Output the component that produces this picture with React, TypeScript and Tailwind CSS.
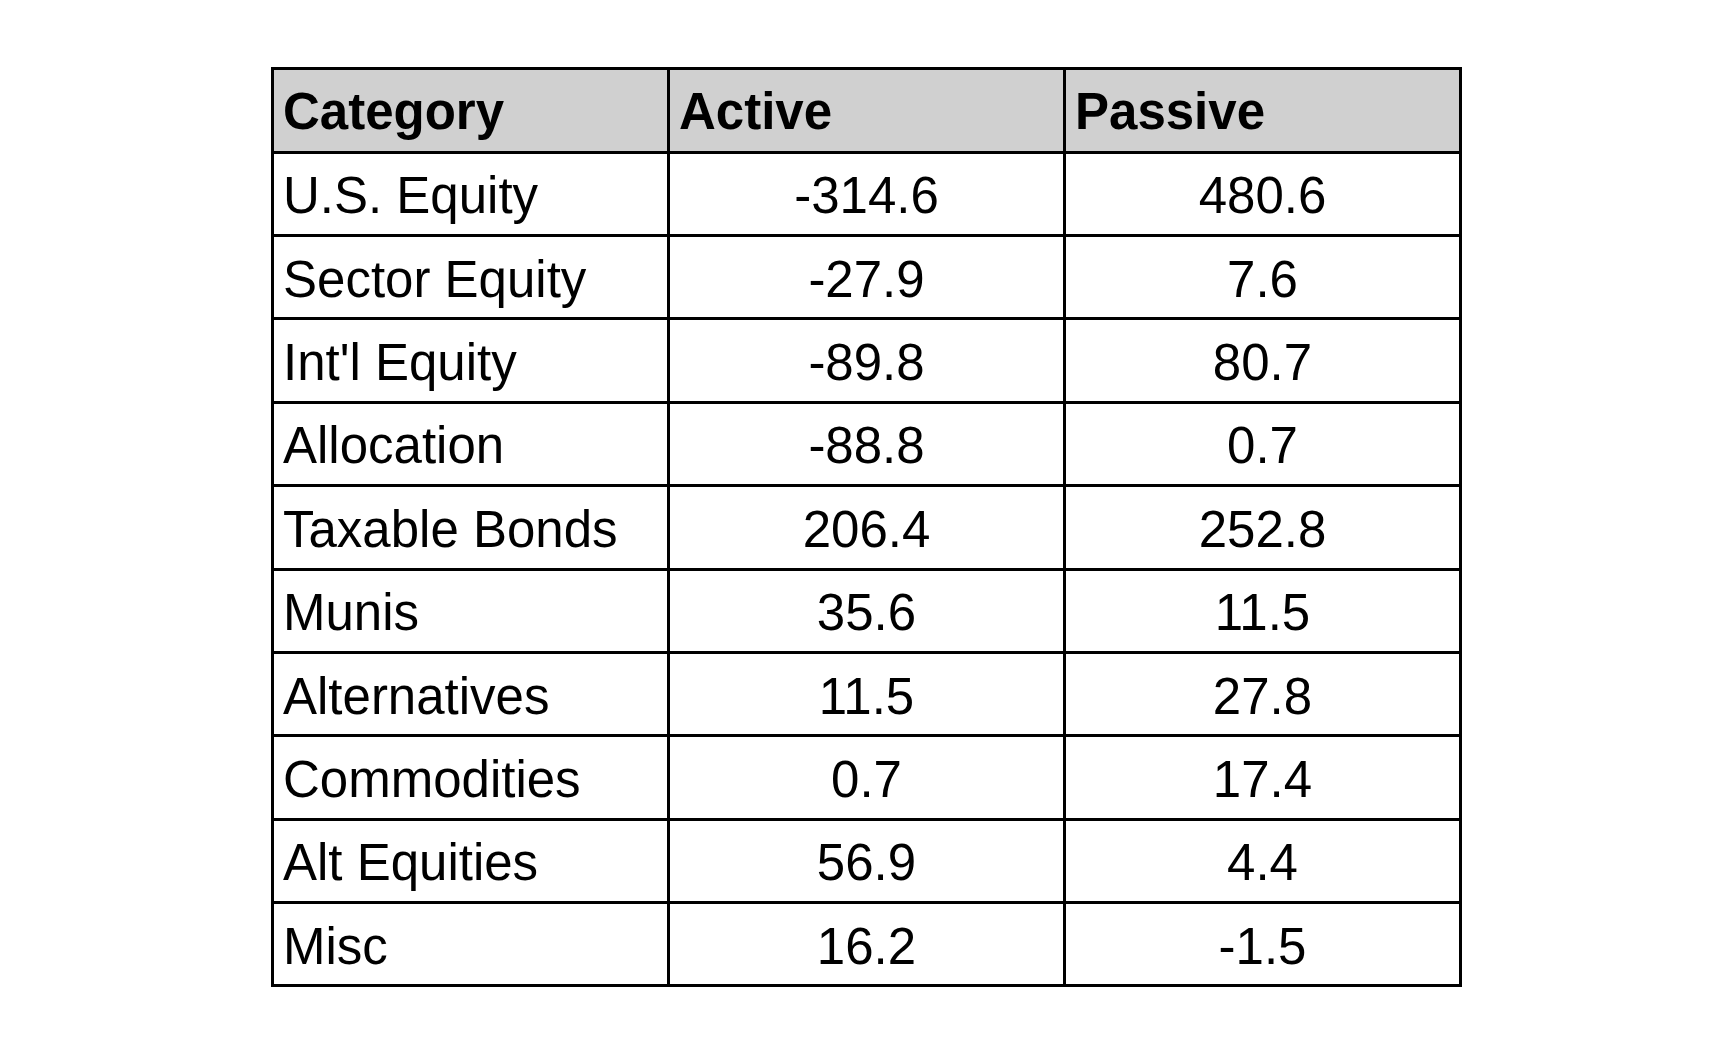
const rows: [string, string, string][] = [
  ['U.S. Equity', '-314.6', '480.6'],
  ['Sector Equity', '-27.9', '7.6'],
  ["Int'l Equity", '-89.8', '80.7'],
  ['Allocation', '-88.8', '0.7'],
  ['Taxable Bonds', '206.4', '252.8'],
  ['Munis', '35.6', '11.5'],
  ['Alternatives', '11.5', '27.8'],
  ['Commodities', '0.7', '17.4'],
  ['Alt Equities', '56.9', '4.4'],
  ['Misc', '16.2', '-1.5'],
]

export default function App() {
  return (
    <div className="flex h-[1054px] w-full items-center justify-center bg-white font-['Liberation_Sans',Arial,sans-serif] text-[51px] text-black">
      <div className="grid w-[1191px] grid-cols-3 border-l-[3px] border-t-[3px] border-black">
        {['Category', 'Active', 'Passive'].map((h) => (
          <div
            key={h}
            className="flex h-[84px] items-center border-b-[3px] border-r-[3px] border-black bg-[#d0d0d0] pl-[9px] pt-[3px] font-bold leading-none"
          >
            {h}
          </div>
        ))}
        {rows.map(([cat, active, passive]) => (
          <div key={cat} className="contents">
            <div className="flex h-[83.4px] items-center border-b-[3px] border-r-[3px] border-black pl-[9px] pt-[4px] leading-none">
              {cat}
            </div>
            <div className="flex h-[83.4px] items-center justify-center border-b-[3px] border-r-[3px] border-black pt-[4px] leading-none">
              {active}
            </div>
            <div className="flex h-[83.4px] items-center justify-center border-b-[3px] border-r-[3px] border-black pt-[4px] leading-none">
              {passive}
            </div>
          </div>
        ))}
      </div>
    </div>
  )
}
